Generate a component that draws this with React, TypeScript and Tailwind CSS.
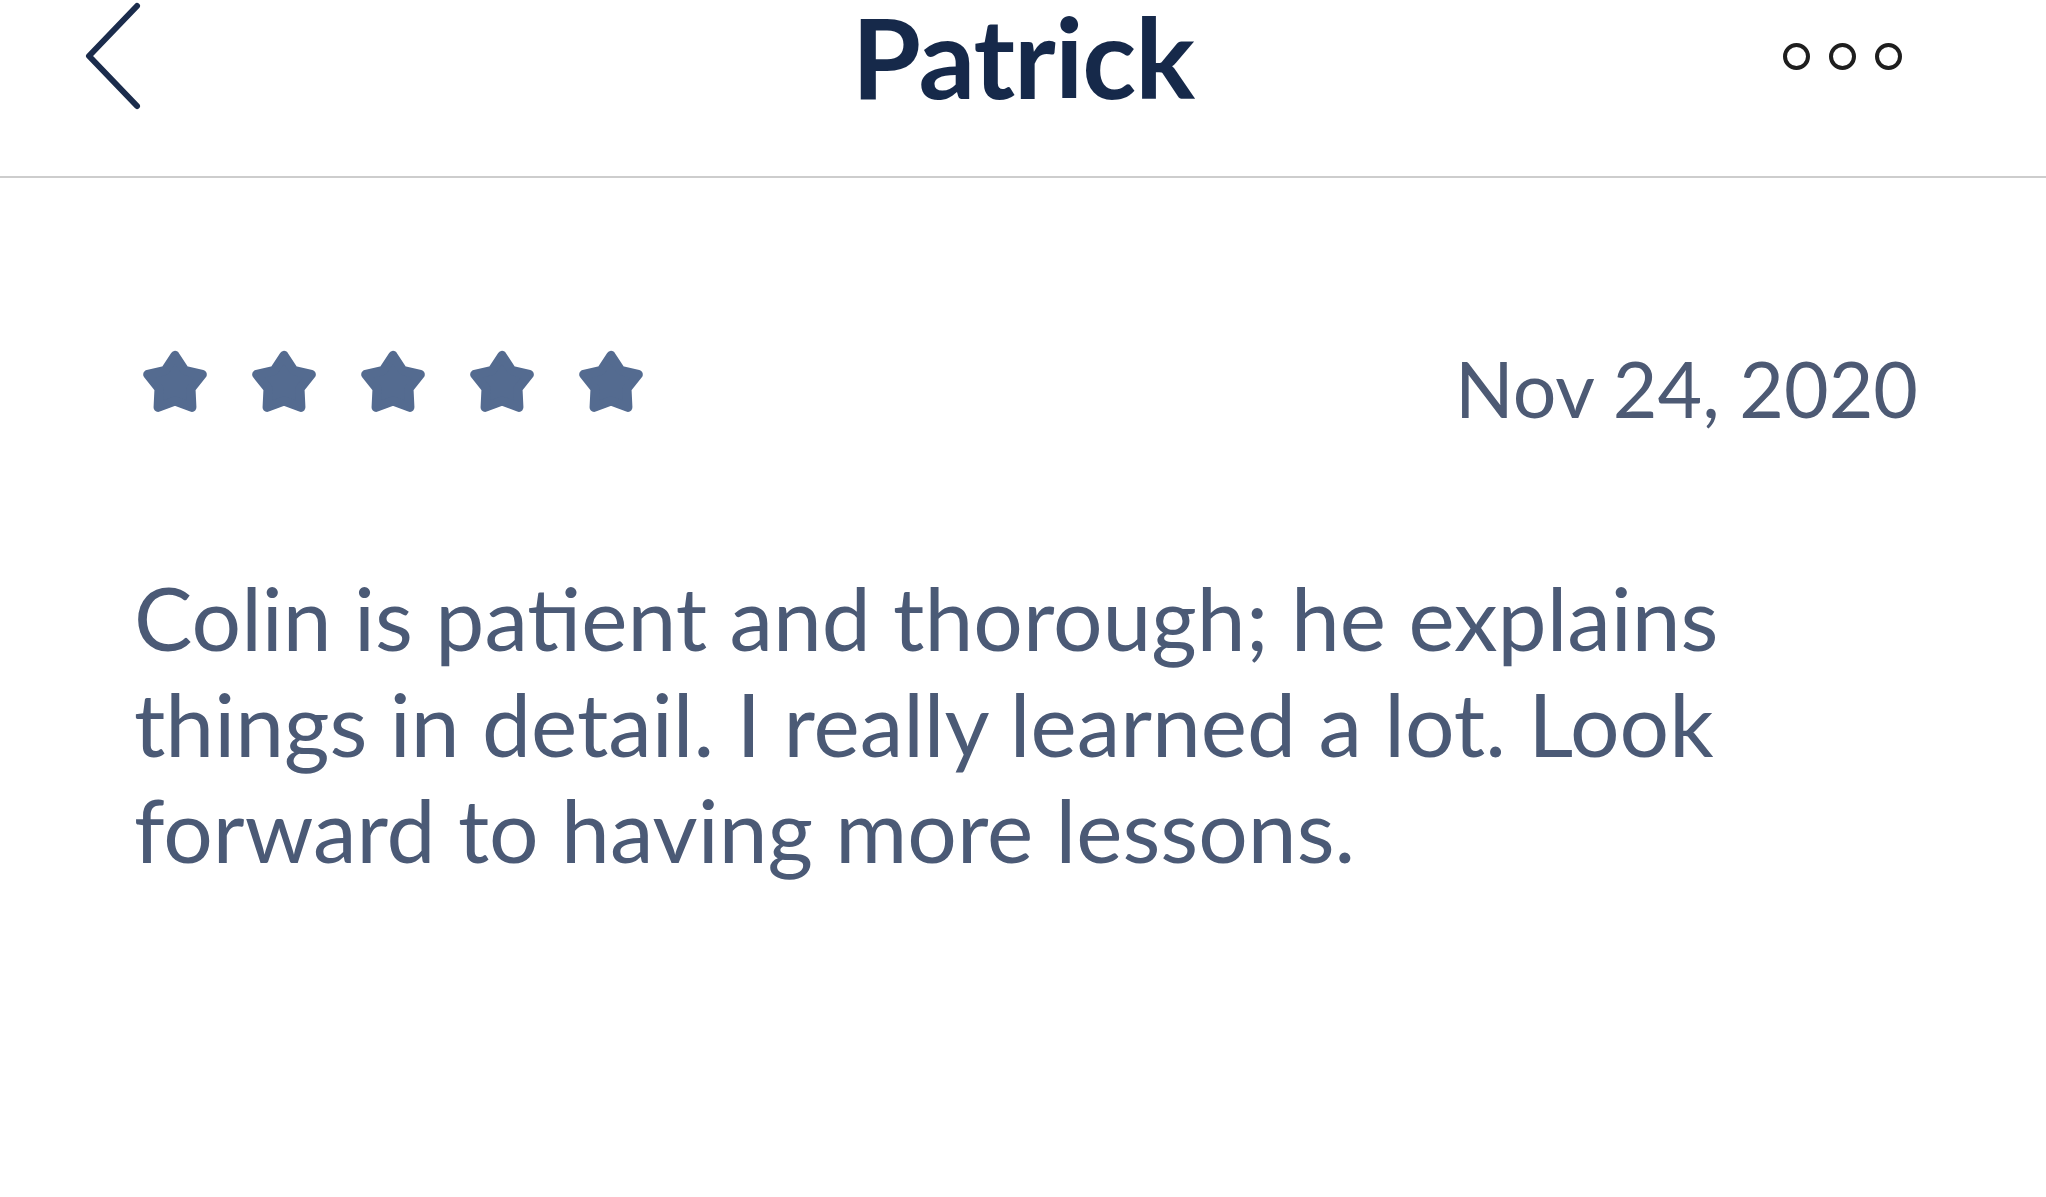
import React from 'react';

const Star: React.FC = () => (
  <svg width="70" height="70" viewBox="0 0 100 100" className="shrink-0">
    <polygon
      points="50,12 64.1,33.6 89,39.3 72.8,59.4 74.1,86.2 50,77 25.9,86.2 27.2,59.4 11,39.3 35.9,33.6"
      fill="#546b90"
      stroke="#546b90"
      strokeWidth="13"
      strokeLinejoin="round"
    />
  </svg>
);

export default function App() {
  return (
    <div className="w-[2046px] h-[1197px] bg-white overflow-hidden" style={{ fontFamily: 'Lato, "Open Sans", sans-serif' }}>
      {/* Header */}
      <div className="grid grid-cols-[1fr_auto_1fr] items-center h-[112px]">
        <div className="pl-[84px]">
          <svg width="58" height="110" viewBox="0 0 58 110" className="block">
            <polyline points="53,5 5,55 53,105" fill="none" stroke="#1b2c4c" strokeWidth="6" strokeLinecap="round" strokeLinejoin="round" />
          </svg>
        </div>
        <h1 className="text-[112px] leading-[112px] font-bold text-[#16294a] tracking-[-1px]">Patrick</h1>
        <div className="flex justify-end pr-[144px]">
          <div className="flex items-center gap-[19px]">
            {[0, 1, 2].map((i) => (
              <span key={i} className="block w-[27px] h-[27px] rounded-full border-[4.5px] border-[#1e1e1e]" />
            ))}
          </div>
        </div>
      </div>
      <div className="mt-[64px] h-[2px] bg-[#cdcdcd]" />

      {/* Review */}
      <div className="pl-[134px] pr-[128px]">
        <div className="flex justify-between items-start mt-[169px]">
          <div className="flex gap-[39px] ml-[6px]">
            <Star />
            <Star />
            <Star />
            <Star />
            <Star />
          </div>
          <span className="mt-[3px] text-[77px] leading-none text-[#4d5a74]">Nov 24, 2020</span>
        </div>
        <p className="mt-[138px] text-[87.5px] leading-[106px] text-[#4b5a76]">
          Colin is patient and thorough; he explains things in detail. I really learned a lot. Look forward to having more lessons.
        </p>
      </div>
    </div>
  );
}
